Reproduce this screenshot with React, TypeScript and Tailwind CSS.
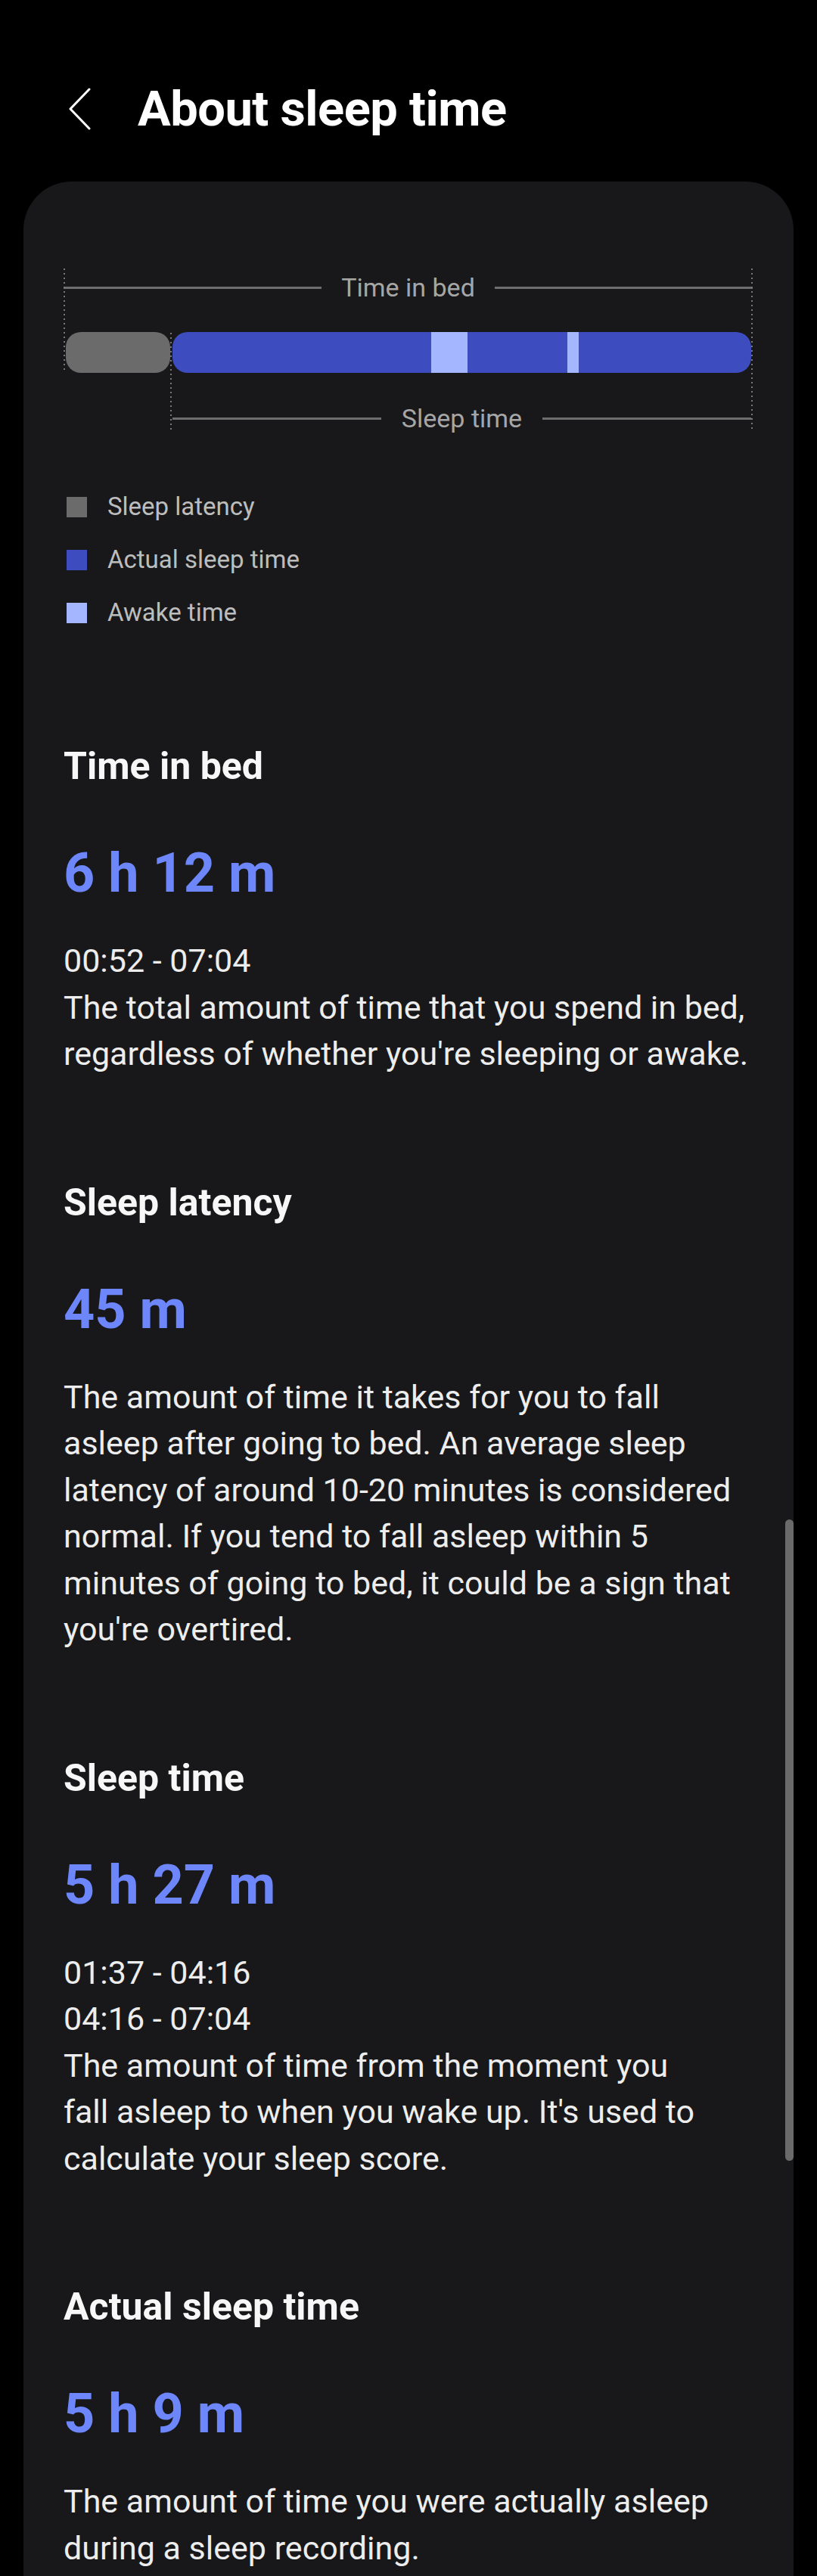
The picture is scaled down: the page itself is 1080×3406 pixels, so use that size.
interface Section {
  title: string;
  value: string;
  lines: string[];
}

// line breaks follow the screenshot exactly
const sections: Section[] = [
  {
    title: "Time in bed",
    value: "6 h 12 m",
    lines: [
      "00:52 - 07:04",
      "The total amount of time that you spend in bed,",
      "regardless of whether you're sleeping or awake.",
    ],
  },
  {
    title: "Sleep latency",
    value: "45 m",
    lines: [
      "The amount of time it takes for you to fall",
      "asleep after going to bed. An average sleep",
      "latency of around 10-20 minutes is considered",
      "normal. If you tend to fall asleep within 5",
      "minutes of going to bed, it could be a sign that",
      "you're overtired.",
    ],
  },
  {
    title: "Sleep time",
    value: "5 h 27 m",
    lines: [
      "01:37 - 04:16",
      "04:16 - 07:04",
      "The amount of time from the moment you",
      "fall asleep to when you wake up. It's used to",
      "calculate your sleep score.",
    ],
  },
  {
    title: "Actual sleep time",
    value: "5 h 9 m",
    lines: [
      "The amount of time you were actually asleep",
      "during a sleep recording.",
    ],
  },
];

const legend = [
  { label: "Sleep latency", color: "bg-[#6b6b6b]" },
  { label: "Actual sleep time", color: "bg-[#3d4dbf]" },
  { label: "Awake time", color: "bg-[#a4b6ff]" },
];

function Marker({ className }: { className: string }) {
  return (
    <div
      className={`absolute w-[2px] bg-[repeating-linear-gradient(to_bottom,#777777_0px,#777777_2px,transparent_2px,transparent_6px)] ${className}`}
    />
  );
}

function Diagram() {
  return (
    <div className="relative w-[911px] h-[215px]">
      <Marker className="left-0 top-0 h-[135px]" />
      <Marker className="left-[909px] top-0 h-[213px]" />
      <Marker className="left-[141px] top-[85px] h-[130px]" />

      <div className="flex items-center h-[50px]">
        <div className="flex-1 h-[3px] bg-[#6e6e6e]" />
        <span className="mx-[26px] text-[34px] leading-[50px] text-[#a6a6a6]">
          Time in bed
        </span>
        <div className="flex-1 h-[3px] bg-[#6e6e6e]" />
      </div>

      <div className="flex mt-[34px] h-[54px] pl-[3px] pr-[2px] gap-[3px]">
        <div className="w-[138px] rounded-[20px] bg-[#6b6b6b]" />
        <div className="flex flex-1 rounded-[20px] overflow-hidden">
          <div className="w-[342px] bg-[#3d4dbf]" />
          <div className="w-[48px] bg-[#a4b6ff]" />
          <div className="w-[132px] bg-[#3d4dbf]" />
          <div className="w-[15px] bg-[#a4b6ff]" />
          <div className="flex-1 bg-[#3d4dbf]" />
        </div>
      </div>

      <div className="flex items-center h-[50px] mt-[35px] ml-[144px] mr-[2px]">
        <div className="flex-1 h-[3px] bg-[#6e6e6e]" />
        <span className="mx-[27px] text-[34px] leading-[50px] text-[#a6a6a6]">
          Sleep time
        </span>
        <div className="flex-1 h-[3px] bg-[#6e6e6e]" />
      </div>
    </div>
  );
}

export default function App() {
  return (
    <div className="h-[3406px] overflow-hidden bg-black flex flex-col font-[Roboto,'Noto_Sans',sans-serif]">
      <header className="flex items-center h-[88px] mt-[100px] mb-[52px]">
        <svg
          className="ml-[90px]"
          width="30"
          height="56"
          viewBox="0 0 30 56"
          fill="none"
          stroke="white"
          strokeWidth="3"
          strokeLinecap="round"
          strokeLinejoin="round"
        >
          <path d="M28 2 L3 28 L28 54" />
        </svg>
        <h1 className="ml-[62px] text-[65px] leading-[88px] font-bold text-white tracking-[-0.5px]">
          About sleep time
        </h1>
      </header>

      <main className="relative flex-1 mx-[31px] bg-[#18181a] rounded-t-[64px] pl-[53px] pt-[115px]">
        <div className="absolute right-0 top-[1769px] w-[11px] h-[848px] rounded-full bg-[#6a6a6a]" />

        <Diagram />

        <ul className="mt-[65px]">
          {legend.map((item) => (
            <li key={item.label} className="flex items-center h-[70px]">
              <span className={`ml-[4px] w-[27px] h-[27px] ${item.color}`} />
              <span className="ml-[27px] text-[33px] leading-[50px] text-[#bdbdbd]">
                {item.label}
              </span>
            </li>
          ))}
        </ul>

        <div className="mt-[138px] flex flex-col gap-[135px]">
          {sections.map((s) => (
            <section key={s.title}>
              <h2 className="text-[50px] leading-[60px] font-bold text-[#f7f7f7]">
                {s.title}
              </h2>
              <div className="mt-[72px] text-[72px] leading-[80px] font-bold text-[#6d87fb]">
                {s.value}
              </div>
              <div className="mt-[45px] text-[43px] leading-[61.5px] text-[#ededed] whitespace-nowrap">
                {s.lines.map((line) => (
                  <p key={line}>{line}</p>
                ))}
              </div>
            </section>
          ))}
        </div>
      </main>
    </div>
  );
}
